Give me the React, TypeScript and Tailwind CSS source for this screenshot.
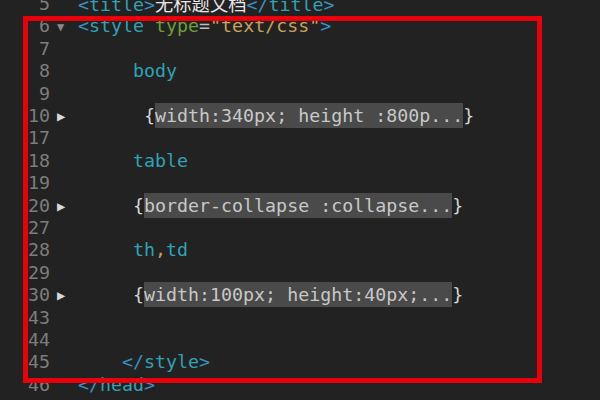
import React from 'react';

type Seg = { t: string; c?: string; box?: boolean; cjk?: boolean };
type Line = { n: number; fold?: 'open' | 'closed'; segs: Seg[] };

const TAG = 'text-[#2fa2b6]';
const BR = 'text-[#3a90c2]';
const PLAIN = 'text-[#d4d4d4]';

const lines: Line[] = [
  {
    n: 5,
    segs: [
      { t: '<', c: BR },
      { t: 'title', c: TAG },
      { t: '>', c: BR },
      { t: '无标题文档', c: 'text-[#e6e6e6]', cjk: true },
      { t: '</', c: BR },
      { t: 'title', c: TAG },
      { t: '>', c: BR },
    ],
  },
  {
    n: 6,
    fold: 'open',
    segs: [
      { t: '<', c: BR },
      { t: 'style', c: TAG },
      { t: ' ' },
      { t: 'type', c: 'text-[#6f9e3c]' },
      { t: '=', c: 'text-[#bdbdbd]' },
      { t: '"text/css"', c: 'text-[#c9a05e]' },
      { t: '>', c: BR },
    ],
  },
  { n: 7, segs: [] },
  { n: 8, segs: [{ t: '     ' }, { t: 'body', c: TAG }] },
  { n: 9, segs: [] },
  {
    n: 10,
    fold: 'closed',
    segs: [
      { t: '      ' },
      { t: '{', c: PLAIN },
      { t: 'width:340px; height :800p...', box: true },
      { t: '}', c: PLAIN },
    ],
  },
  { n: 17, segs: [] },
  { n: 18, segs: [{ t: '     ' }, { t: 'table', c: TAG }] },
  { n: 19, segs: [] },
  {
    n: 20,
    fold: 'closed',
    segs: [
      { t: '     ' },
      { t: '{', c: PLAIN },
      { t: 'border-collapse :collapse...', box: true },
      { t: '}', c: PLAIN },
    ],
  },
  { n: 27, segs: [] },
  { n: 28, segs: [{ t: '     ' }, { t: 'th', c: TAG }, { t: ',', c: 'text-[#c9a05e]' }, { t: 'td', c: TAG }] },
  { n: 29, segs: [] },
  {
    n: 30,
    fold: 'closed',
    segs: [
      { t: '     ' },
      { t: '{', c: PLAIN },
      { t: 'width:100px; height:40px;...', box: true },
      { t: '}', c: PLAIN },
    ],
  },
  { n: 43, segs: [] },
  { n: 44, segs: [] },
  {
    n: 45,
    segs: [
      { t: '    ' },
      { t: '</', c: BR },
      { t: 'style', c: TAG },
      { t: '>', c: BR },
    ],
  },
  {
    n: 46,
    segs: [
      { t: '</', c: BR },
      { t: 'head', c: TAG },
      { t: '>', c: BR },
    ],
  },
];

const App = () => {
  return (
    <div
      className="relative w-[600px] h-[400px] overflow-hidden bg-[#222222]"
      style={{ fontFamily: '"DejaVu Sans Mono", "Noto Sans CJK SC", monospace' }}
    >
      <div className="flex flex-col mt-[-7px]">
        {lines.map((line) => (
          <div key={line.n} className="flex items-center h-[22.4px] text-[18.3px] leading-none">
            {/* gutter */}
            <span className="w-[50px] text-right text-[#7d7d7d]">{line.n}</span>
            <span className="w-[28px] flex items-center pl-[7px]">
              {line.fold === 'open' && <span className="text-[#8a8a8a] text-[12px]">▼</span>}
              {line.fold === 'closed' && <span className="text-[#d8d8d8] text-[14px]">▶</span>}
            </span>
            {/* code */}
            <span className="whitespace-pre">
              {line.segs.map((s, i) =>
                s.box ? (
                  <span key={i} className="bg-[#4a4a4a] text-[#c8c8c8] py-[2px]">
                    {s.t}
                  </span>
                ) : (
                  <span
                    key={i}
                    className={s.c}
                    style={s.cjk ? { fontFamily: '"Noto Sans CJK SC", sans-serif' } : undefined}
                  >
                    {s.t}
                  </span>
                )
              )}
            </span>
          </div>
        ))}
      </div>

      {/* red annotation box */}
      <div className="absolute left-[23px] top-[16px] w-[519px] h-[367px] border-[5px] border-[#e8000b]" />
    </div>
  );
};

export default App;
